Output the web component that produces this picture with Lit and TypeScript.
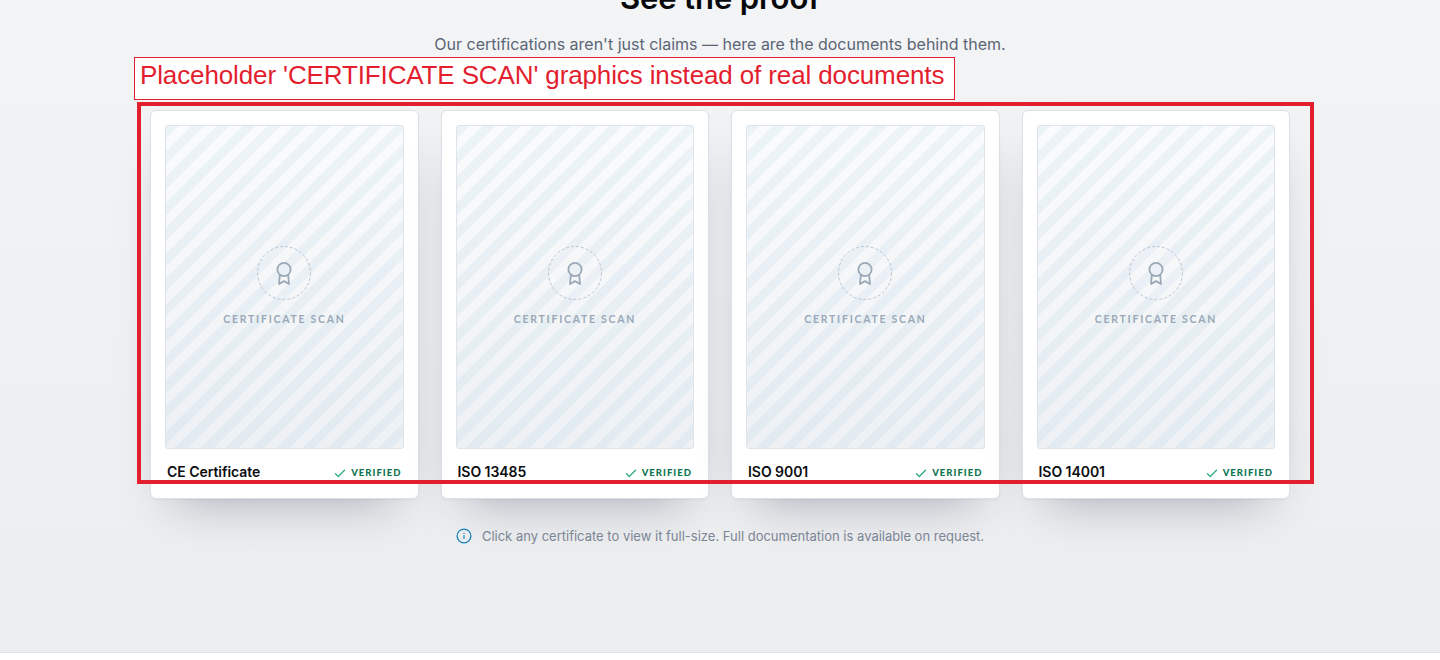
import { LitElement, html, css } from "lit";
import { customElement, property } from "lit/decorators.js";

@customElement("certificate-card")
export class CertificateCard extends LitElement {
  @property() name = "";

  static styles = css`
    :host {
      display: block;
      min-width: 0;
    }

    .card {
      box-sizing: border-box;
      height: 389px;
      padding: 14px;
      background: #fff;
      border: 1px solid #dce1e7;
      border-radius: 6px;
      box-shadow: 0 1px 2px rgba(16, 36, 56, 0.04), 0 24px 48px -24px rgba(14, 34, 54, 0.35);
    }

    .scan {
      box-sizing: border-box;
      height: 324px;
      display: flex;
      flex-direction: column;
      align-items: center;
      justify-content: center;
      gap: 12px;
      padding-bottom: 3px;
      border: 1px solid #dee4ea;
      border-radius: 3px;
      background: repeating-linear-gradient(
          135deg,
          rgba(14, 124, 181, 0.055) 0 9px,
          transparent 9px 18px
        ),
        linear-gradient(180deg, #fafbfc, #eef1f4);
    }

    .seal {
      width: 54px;
      height: 54px;
      display: block;
    }

    .label {
      font: 700 10.5px/14px Lato, sans-serif;
      letter-spacing: 1.74px;
      margin-right: -0.5px;
      color: #9aa8b7;
      white-space: nowrap;
    }

    .foot {
      display: flex;
      align-items: center;
      justify-content: space-between;
      padding: 14px 2px 0;
      height: 18px;
    }

    .name {
      font: 600 14px/18px Inter, sans-serif;
      letter-spacing: -0.05px;
      color: #0b0d10;
      white-space: nowrap;
    }

    .verified {
      display: flex;
      align-items: center;
      gap: 5px;
      padding-top: 1px;
      font: 900 9.5px/18px Lato, sans-serif;
      letter-spacing: 1.03px;
      color: #0d7350;
    }
  `;

  render() {
    return html`
      <article class="card">
        <div class="scan">
          <svg class="seal" viewBox="0 0 54 54" fill="none">
            <circle cx="27" cy="27" r="26.5" fill="#fff" fill-opacity="0.1" stroke="#b9c4d0" stroke-dasharray="3 2" />
            <g stroke="#9aa8b7" stroke-width="1.8" stroke-linecap="round" stroke-linejoin="round">
              <circle cx="27" cy="23.5" r="6.6" />
              <path d="M22.8 29.2 22 38l5-2.9 5 2.9-.8-8.8" />
            </g>
          </svg>
          <span class="label">CERTIFICATE SCAN</span>
        </div>
        <div class="foot">
          <span class="name">${this.name}</span>
          <span class="verified">
            <svg width="12" height="12" viewBox="0 0 24 24" fill="none" stroke="#2fa984" stroke-width="2.6" stroke-linecap="round" stroke-linejoin="round">
              <path d="M3 13.5 8.5 19 21 6.5" />
            </svg>
            <span>VERIFIED</span>
          </span>
        </div>
      </article>
    `;
  }
}

@customElement("app-root")
export class AppRoot extends LitElement {
  static properties = {
    certificates: { type: Array },
  };

  certificates = ["CE Certificate", "ISO 13485", "ISO 9001", "ISO 14001"];

  static styles = css`
    :host {
      display: block;
      position: relative;
      height: 660px;
      overflow: hidden;
      background: #fff;
      font-family: Inter, sans-serif;
    }

    .proof {
      box-sizing: border-box;
      height: 653px;
      border-bottom: 1px solid #dfe2e6;
      background: linear-gradient(180deg, #f3f4f6, #ecedef);
      display: flex;
      flex-direction: column;
      align-items: center;
    }

    .title {
      margin: -21px 0 0;
      font-size: 31px;
      line-height: 38px;
      font-weight: 600;
      letter-spacing: -0.1px;
      color: #06080b;
    }

    .lead {
      margin: 14px 0 0;
      font-size: 16px;
      line-height: 26px;
      color: #5b6675;
    }

    .grid {
      width: 1140px;
      margin-top: 53px;
      display: grid;
      grid-template-columns: repeat(4, 1fr);
      gap: 22px;
    }

    .note {
      display: flex;
      align-items: center;
      gap: 10px;
      margin: 27px 0 0;
      font-size: 13px;
      line-height: 20px;
      color: #7b8594;
    }

    .frame {
      position: absolute;
      box-sizing: border-box;
      left: 137px;
      top: 102px;
      width: 1177px;
      height: 382px;
      border: 4px solid #e31e2f;
    }

    .callout {
      position: absolute;
      box-sizing: border-box;
      left: 134px;
      top: 57px;
      width: 821px;
      height: 43px;
      padding: 2px 5px;
      border: 1px solid #e31e2f;
      background: #fff;
      font: 26px/30px "Liberation Sans", sans-serif;
      letter-spacing: -0.125px;
      color: #e31e2f;
      white-space: nowrap;
    }
  `;

  render() {
    return html`
      <section class="proof">
        <h2 class="title">See the proof</h2>
        <p class="lead">Our certifications aren't just claims — here are the documents behind them.</p>
        <div class="grid">
          ${this.certificates.map((name) => html`<certificate-card name=${name}></certificate-card>`)}
        </div>
        <p class="note">
          <svg width="16" height="16" viewBox="0 0 16 16" fill="none" stroke="#1a84bd" stroke-linecap="round">
            <circle cx="8" cy="8" r="6.9" stroke-width="1.3" />
            <path d="M8 7.5v3M8 5.4v.1" stroke-width="1.2" />
          </svg>
          <span>Click any certificate to view it full-size. Full documentation is available on request.</span>
        </p>
      </section>
      <div class="frame"></div>
      <div class="callout">Placeholder 'CERTIFICATE SCAN' graphics instead of real documents</div>
    `;
  }
}
